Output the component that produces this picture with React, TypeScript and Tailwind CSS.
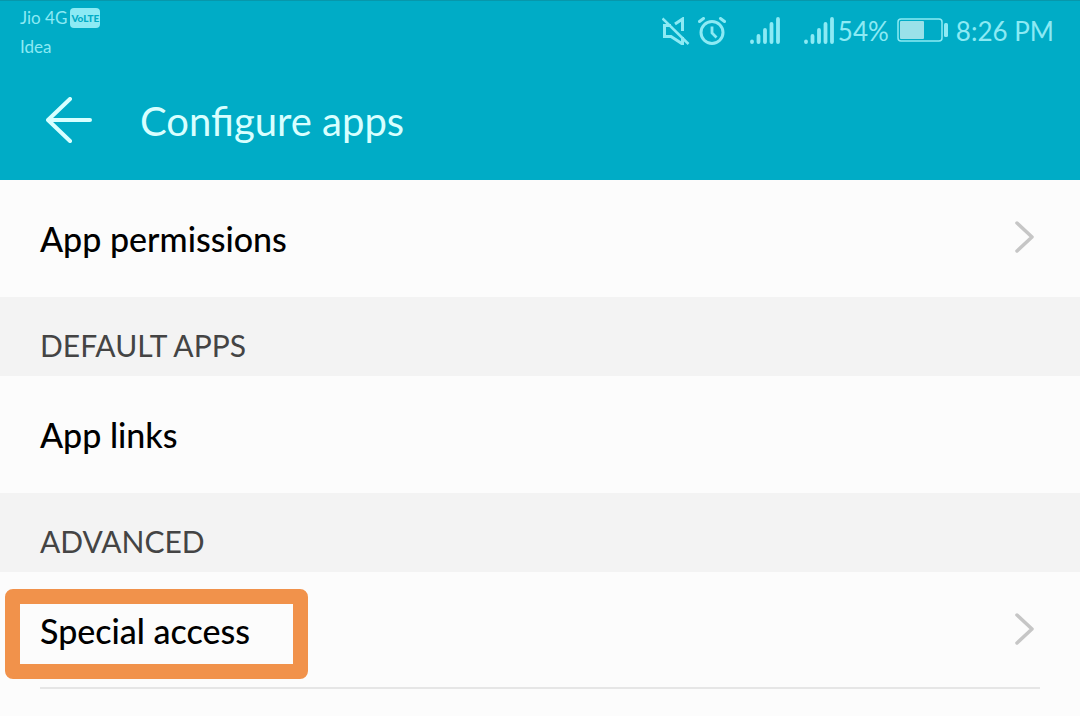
import type { ReactNode } from "react";

function MuteIcon() {
  return (
    <svg className="h-7 w-7" viewBox="0 0 28 28" fill="none" stroke="currentColor" strokeWidth="3" aria-label="Sound off">
      <path d="M13 7L20.500 2V14M9 8.500H2.500V19.500H9L20.500 27V20" />
      <path d="M0.500 1.500L26.500 27" strokeWidth="2.500" />
    </svg>
  );
}

function AlarmIcon() {
  return (
    <svg className="h-7 w-7" viewBox="0 0 28 28" fill="none" stroke="currentColor" strokeWidth="3" strokeLinecap="round" aria-label="Alarm set">
      <circle cx="14" cy="15.500" r="11" />
      <path d="M14 9.500V16L18.500 20.500" strokeWidth="2.800" strokeLinecap="butt" />
      <path d="M1.500 4.500L5.500 1.500M26.500 4.500L22.500 1.500" />
    </svg>
  );
}

function SignalIcon() {
  return (
    <svg className="h-7 w-[30px]" viewBox="0 0 30 28" fill="none" stroke="currentColor" strokeWidth="3.800" strokeLinecap="round" aria-label="Signal strength">
      <path d="M2 24.500V25M8.500 19V25M15 13V25M21.500 7V25M28 2V25" />
    </svg>
  );
}

function BatteryIcon() {
  return (
    <svg className="mb-[2px] h-6 w-[51px]" viewBox="0 0 51 24" fill="none" aria-label="Battery">
      <rect x="1" y="1" width="44" height="22" rx="3" stroke="currentColor" strokeWidth="1.500" />
      <rect x="3" y="3" width="24" height="18" rx="1" fill="#9ae1e9" />
      <rect x="47" y="5" width="4" height="14" rx="1.500" fill="currentColor" />
    </svg>
  );
}

function Chevron() {
  return (
    <svg className="mb-1 h-8 w-5" viewBox="0 0 20 32" fill="none" stroke="#c6c6c6" strokeWidth="3.500" strokeLinecap="round" strokeLinejoin="round" aria-hidden="true">
      <path d="M2 2L17 16L2 30" />
    </svg>
  );
}

function SectionHeading({ children }: { children: ReactNode }) {
  return (
    <h2 className="bg-[#f3f3f3] px-10 pt-[29px] pb-3 text-[30px] leading-[38px] text-[#444444]">
      {children}
    </h2>
  );
}

type RowProps = {
  label: string;
  chevron?: boolean;
  highlighted?: boolean;
};

function SettingsRow({ label, chevron, highlighted }: RowProps) {
  return (
    <button type="button" className="relative flex w-full items-center justify-between px-10 py-[34px] text-left text-[34px] leading-[49px] font-medium text-black">
      <span>{label}</span>
      <span className="pr-[5px]">{chevron && <Chevron />}</span>
      {highlighted && (
        <span className="absolute top-[17px] left-[5px] h-[90px] w-[303px] rounded-lg border-[15px] border-[#f1924b]" />
      )}
    </button>
  );
}

export default function App() {
  return (
    <div className="min-h-screen bg-[#fcfcfc] font-[Lato,sans-serif]">
      <header className="border-t border-[#0797ab] bg-[#00acc6]">
        <div className="flex items-start justify-between pr-[26px] pl-5 text-[#8ceaf4]">
          <div className="pt-[2px] text-[17px] leading-[29px]">
            <div className="flex items-center gap-[3px]">
              <span>Jio 4G</span>
              <span className="rounded-sm bg-[#8ceaf4] px-px text-[10px] leading-5 font-black text-[#00acc6]">VoLTE</span>
            </div>
            <div>Idea</div>
          </div>
          <div className="flex items-center pt-[10px] text-[26px] leading-10">
            <MuteIcon />
            <span className="ml-2"><AlarmIcon /></span>
            <span className="ml-6"><SignalIcon /></span>
            <span className="ml-6"><SignalIcon /></span>
            <span className="ml-1">54%</span>
            <span className="ml-2"><BatteryIcon /></span>
            <span className="ml-2">8:26 PM</span>
          </div>
        </div>
        <div className="flex items-center gap-12 px-[46px] pt-[30px] pb-[29px] text-[#d8ffff]">
          <button type="button" aria-label="Back">
            <svg className="mb-[2px] h-[46px] w-[46px]" viewBox="0 0 46 46" fill="none" stroke="currentColor" strokeWidth="4" strokeLinecap="round" strokeLinejoin="round">
              <path d="M24 2L2 23L24 44M2 23H44" />
            </svg>
          </button>
          <h1 className="text-[40px] leading-[60px]">Configure apps</h1>
        </div>
      </header>

      <main>
        <SettingsRow label="App permissions" chevron />
        <SectionHeading>DEFAULT APPS</SectionHeading>
        <SettingsRow label="App links" />
        <SectionHeading>ADVANCED</SectionHeading>
        <SettingsRow label="Special access" chevron highlighted />
        <hr className="mx-10 -mt-[2px] border-t-2 border-[#e6e6e6]" />
      </main>
    </div>
  );
}
